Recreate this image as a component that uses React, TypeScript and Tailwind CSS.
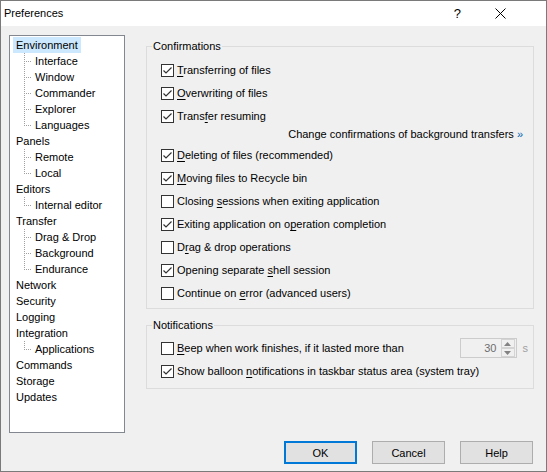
import React from "react";

type TreeNode = { label: string; children?: string[] };

const tree: TreeNode[] = [
  { label: "Environment", children: ["Interface", "Window", "Commander", "Explorer", "Languages"] },
  { label: "Panels", children: ["Remote", "Local"] },
  { label: "Editors", children: ["Internal editor"] },
  { label: "Transfer", children: ["Drag & Drop", "Background", "Endurance"] },
  { label: "Network" },
  { label: "Security" },
  { label: "Logging" },
  { label: "Integration", children: ["Applications"] },
  { label: "Commands" },
  { label: "Storage" },
  { label: "Updates" },
];

type Opt = { parts: [string, string, string]; checked: boolean };

const confirmTop: Opt[] = [
  { parts: ["", "T", "ransferring of files"], checked: true },
  { parts: ["", "O", "verwriting of files"], checked: true },
  { parts: ["Trans", "f", "er resuming"], checked: true },
];

const confirmRest: Opt[] = [
  { parts: ["", "D", "eleting of files (recommended)"], checked: true },
  { parts: ["", "M", "oving files to Recycle bin"], checked: true },
  { parts: ["Closing ", "s", "essions when exiting application"], checked: false },
  { parts: ["Exiting application on o", "p", "eration completion"], checked: true },
  { parts: ["D", "r", "ag & drop operations"], checked: false },
  { parts: ["Opening separate ", "s", "hell session"], checked: true },
  { parts: ["Continue on ", "e", "rror (advanced users)"], checked: false },
];

function Branch({ last }: { last: boolean }) {
  return (
    <svg width="19" height="16" className="shrink-0">
      <line x1="11.5" y1="0" x2="11.5" y2={last ? 9 : 16} stroke="#a0a0a0" strokeDasharray="1 1" />
      <line x1="13" y1="8.5" x2="20" y2="8.5" stroke="#a0a0a0" strokeDasharray="1 1" />
    </svg>
  );
}

function NavTree() {
  return (
    <div className="w-[116px] h-[398px] border border-[#828790] bg-white pl-[3px] pt-[1px] text-black">
      {tree.map((n, i) => (
        <div key={n.label}>
          <div className="h-[16px] flex items-center">
            <span className={`px-[3px] leading-[16px] ${i === 0 ? "bg-[#cce8ff]" : ""}`}>{n.label}</span>
          </div>
          {n.children?.map((c, j) => (
            <div key={c} className="h-[16px] flex items-center">
              <Branch last={j === n.children!.length - 1} />
              <span className="px-[3px] leading-[16px]">{c}</span>
            </div>
          ))}
        </div>
      ))}
    </div>
  );
}

function CheckBox({ checked }: { checked: boolean }) {
  return (
    <span className="mt-[2px] w-[13px] h-[13px] border border-[#333333] bg-white shrink-0 flex items-center justify-center">
      {checked && (
        <svg width="11" height="11" viewBox="0 0 11 11">
          <polyline points="1.5,5.5 4,8 9.5,2.5" fill="none" stroke="#333333" strokeWidth="1.2" />
        </svg>
      )}
    </span>
  );
}

function Label({ parts }: { parts: [string, string, string] }) {
  return (
    <span className="ml-[3px] leading-[16px] whitespace-nowrap">
      {parts[0]}
      <u className="underline underline-offset-[2px]">{parts[1]}</u>
      {parts[2]}
    </span>
  );
}

function OptionRow({ opt }: { opt: Opt }) {
  return (
    <div className="h-[16px] flex items-start">
      <CheckBox checked={opt.checked} />
      <Label parts={opt.parts} />
    </div>
  );
}

function GroupBox({ title, className, children }: { title: string; className: string; children: React.ReactNode }) {
  return (
    <div className={`relative border border-[#dcdcdc] ${className}`}>
      <span className="absolute left-[5px] top-[-9px] px-[1px] leading-[16px] bg-[#f0f0f0]">{title}</span>
      {children}
    </div>
  );
}

function Spinner() {
  return (
    <div className="flex items-center">
      <div className="w-[57px] h-[20px] border border-[#cccccc] bg-[#f0f0f0] flex items-center pr-[1px]">
        <span className="flex-1 text-right pr-[4px] text-[#6d6d6d] leading-[16px]">30</span>
        <div className="flex flex-col w-[14px] gap-[0px]">
          <div className="h-[9px] border border-[#d4d4d4] bg-[#f0f0f0] flex items-center justify-center">
            <svg width="7" height="4" viewBox="0 0 7 4">
              <polygon points="0,4 3.5,0 7,4" fill="#838383" />
            </svg>
          </div>
          <div className="h-[9px] border border-[#d4d4d4] bg-[#f0f0f0] flex items-center justify-center">
            <svg width="7" height="4" viewBox="0 0 7 4">
              <polygon points="0,0 3.5,4 7,0" fill="#838383" />
            </svg>
          </div>
        </div>
      </div>
      <span className="ml-[6px] text-[#a0a0a0] leading-[16px]">s</span>
    </div>
  );
}

function DialogButton({ label, primary }: { label: string; primary?: boolean }) {
  return (
    <button
      className={`w-[73px] h-[23px] bg-[#e1e1e1] text-black leading-[16px] ${
        primary ? "border-2 border-[#0078d7]" : "border border-[#adadad]"
      }`}
    >
      {label}
    </button>
  );
}

export default function App() {
  return (
    <div className="w-[547px] h-[472px] border border-[#7a7a7a] bg-[#f0f0f0] flex flex-col text-[11px] text-black font-['Liberation_Sans',Arial,sans-serif] overflow-hidden">
      <div className="h-[25px] bg-white flex items-center pl-[3px] shrink-0">
        <span className="text-[11px]">Preferences</span>
        <span className="ml-auto text-[13px] leading-none">?</span>
        <svg width="11" height="11" viewBox="0 0 11 11" className="ml-[34px] mr-[40px]">
          <line x1="0.5" y1="0.5" x2="10.5" y2="10.5" stroke="#000" strokeWidth="1" />
          <line x1="10.5" y1="0.5" x2="0.5" y2="10.5" stroke="#000" strokeWidth="1" />
        </svg>
      </div>

      <div className="flex-1 flex flex-col pt-[9px] pb-[7px]">
        <div className="flex pl-[8px]">
          <NavTree />
          <div className="ml-[21px] w-[388px] pt-[11px]">
            <GroupBox title="Confirmations" className="h-[263px] pl-[14px] pr-[10px] pt-[15px]">
              <div className="flex flex-col gap-[7px]">
                {confirmTop.map((o) => (
                  <OptionRow key={o.parts.join("")} opt={o} />
                ))}
                <div className="h-[16px] -mt-[5px] -mb-[2px] flex justify-end leading-[16px] whitespace-nowrap">
                  <span>
                    Change confirmations of background transfers <span className="text-[#0063b1]">»</span>
                  </span>
                </div>
                {confirmRest.map((o) => (
                  <OptionRow key={o.parts.join("")} opt={o} />
                ))}
              </div>
            </GroupBox>

            <GroupBox title="Notifications" className="mt-[16px] h-[64px] pl-[14px] pr-[5px] pt-[14px]">
              <div className="flex flex-col gap-[7px]">
                <div className="h-[16px] flex items-center">
                  <div className="flex items-start h-[16px]">
                    <CheckBox checked={false} />
                    <Label parts={["", "B", "eep when work finishes, if it lasted more than"]} />
                  </div>
                  <div className="ml-auto">
                    <Spinner />
                  </div>
                </div>
                <OptionRow
                  opt={{ parts: ["Show balloon ", "n", "otifications in taskbar status area (system tray)"], checked: true }}
                />
              </div>
            </GroupBox>
          </div>
        </div>

        <div className="mt-[8px] flex justify-end gap-[15px] pr-[13px]">
          <DialogButton label="OK" primary />
          <DialogButton label="Cancel" />
          <DialogButton label="Help" />
        </div>
      </div>
    </div>
  );
}
